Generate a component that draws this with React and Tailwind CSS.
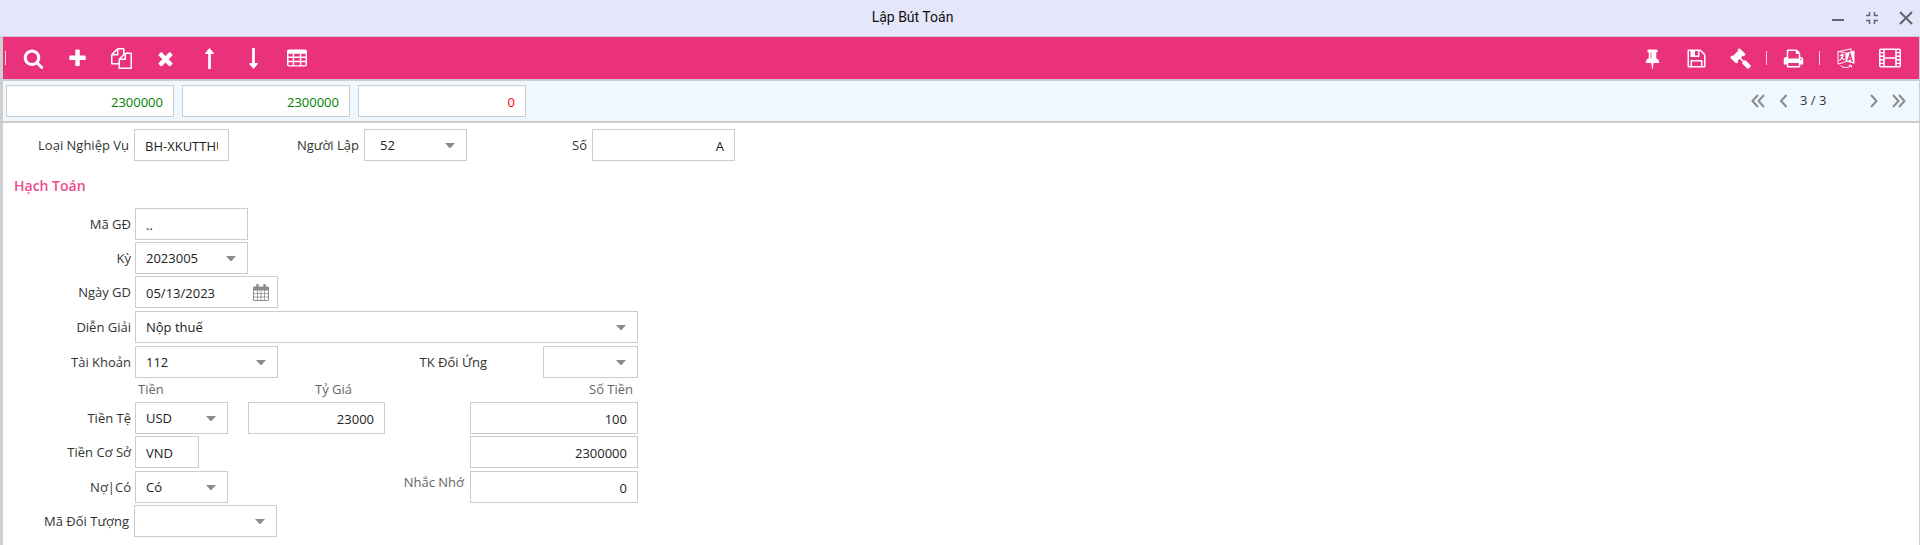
import React from "react";

const ICONS = {
    search: "M1216 832q0-185-131.5-316.5t-316.5-131.5-316.5 131.5-131.5 316.5 131.5 316.5 316.5 131.5 316.5-131.5 131.5-316.5zm512 832q0 52-38 90t-90 38q-54 0-90-38l-343-342q-179 124-399 124-143 0-273.5-55.5t-225-150-150-225-55.5-273.5 55.5-273.5 150-225 225-150 273.5-55.5 273.5 55.5 225 150 150 225 55.5 273.5q0 220-124 399l343 343q37 37 37 90z",
    plus: "M1600 736v192q0 40-28 68t-68 28h-416v416q0 40-28 68t-68 28h-192q-40 0-68-28t-28-68v-416h-416q-40 0-68-28t-28-68v-192q0-40 28-68t68-28h416v-416q0-40 28-68t68-28h192q40 0 68 28t28 68v416h416q40 0 68 28t28 68z",
    copy: "M1696 384q40 0 68 28t28 68v1216q0 40-28 68t-68 28h-960q-40 0-68-28t-28-68v-288h-544q-40 0-68-28t-28-68v-672q0-40 20-88t48-76l408-408q28-28 76-48t88-20h416q40 0 68 28t28 68v328q68-40 128-40h416zm-544 213l-299 299h299v-299zm-640-384l-299 299h299v-299zm196 647l316-316v-416h-384v416q0 40-28 68t-68 28h-416v640h512v-256q0-40 20-88t48-76zm956 804v-1152h-384v416q0 40-28 68t-68 28h-416v640h896z",
    times: "M1490 1322q0 40-28 68l-136 136q-28 28-68 28t-68-28l-294-294-294 294q-28 28-68 28t-68-28l-136-136q-28-28-28-68t28-68l294-294-294-294q-28-28-28-68t28-68l136-136q28-28 68-28t68 28l294 294 294-294q28-28 68-28t68 28l136 136q28 28 28 68t-28 68l-294 294 294 294q28 28 28 68z",
    up: "M896 0L1260 420q20 28 0 60t-50 32h-198v1248q0 32-32 32h-168q-32 0-32-32v-1248h-198q-30 0-50-32t0-60z",
    down: "M896 1792L1260 1372q20-28 0-60t-50-32h-198v-1248q0-32-32-32h-168q-32 0-32 32v1248h-198q-30 0-50 32t0 60z",
    table: "M160 128h1472q160 0 160 160v1216q0 160-160 160h-1472q-160 0-160-160v-1216q0-160 160-160zM128 512v256h384v-256zM640 512v256h512v-256zM1280 512v256h384v-256zM128 896v256h384v-256zM640 896v256h512v-256zM1280 896v256h384v-256zM128 1280v256h384v-256zM640 1280v256h512v-256zM1280 1280v256h384v-256z",
    pin: "M800 864v-448q0-14-9-23t-23-9-23 9-9 23v448q0 14 9 23t23 9 23-9 9-23zm672 352q0 26-19 45t-45 19h-429l-51 483q-2 12-10.5 20.5t-20.5 8.5h-1q-27 0-32-27l-76-485h-404q-26 0-45-19t-19-45q0-123 78.5-221.5t177.5-98.5v-512q-52 0-90-38t-38-90 38-90 90-38h640q52 0 90 38t38 90-38 90-90 38v512q99 0 177.5 98.5t78.5 221.5z",
    save: "M512 1536h768v-384h-768v384zm896 0h128v-896q0-14-10-38.5t-20-34.5l-281-281q-10-10-34-20t-39-10v416q0 40-28 68t-68 28h-576q-40 0-68-28t-28-68v-416h-128v1280h128v-416q0-40 28-68t68-28h832q40 0 68 28t28 68v416zm-384-928v-320q0-13-9.5-22.5t-22.5-9.5h-192q-13 0-22.5 9.5t-9.5 22.5v320q0 13 9.5 22.5t22.5 9.5h192q13 0 22.5-9.5t9.5-22.5zm640 32v928q0 40-28 68t-68 28h-1344q-40 0-68-28t-28-68v-1344q0-40 28-68t68-28h928q40 0 88 20t76 48l280 280q28 28 48 76t20 88z",
    gavel: "M1771 1536q0 53-37 90l-107 108q-39 37-91 37-53 0-90-37l-363-364q-38-36-38-90 0-53 43-96l-256-256-126 126q-14 14-34 14t-34-14q2 2 12.5 12t12.5 13 10 11.5 10 13.5 6 13.5 5.5 16.5 1.5 18q0 38-28 68-3 3-16.5 18t-19 20.5-18.5 16.5-22 15.5-22 9-26 4.5q-40 0-68-28l-408-408q-28-28-28-68 0-13 4.5-26t9-22 15.5-22 16.5-18.5 20.5-19 18-16.5q30-28 68-28 10 0 18 1.5t16.5 5.5 13.5 6 13.5 10 11.5 10 13 12.5 12 12.5q-14-14-14-34t14-34l348-348q14-14 34-14t34 14q-2-2-12.5-12t-12.5-13-10-11.5-10-13.5-6-13.5-5.5-16.5-1.5-18q0-38 28-68 3-3 16.5-18t19-20.5 18.5-16.5 22-15.5 22-9 26-4.5q40 0 68 28l408 408q28 28 28 68 0 13-4.5 26t-9 22-15.5 22-16.5 18.5-20.5 19-18 16.5q-30 28-68 28-10 0-18-1.5t-16.5-5.5-13.5-6-13.5-10-11.5-10-13-12.5-12-12.5q14 14 14 34t-14 34l-126 126 256 256q43-43 96-43 52 0 91 37l363 363q37 39 37 91z",
    print: "M448 1536h896v-256h-896v256zm0-640h896v-384h-160q-40 0-68-28t-28-68v-160h-640v640zm1152 64q0-26-19-45t-45-19-45 19-19 45 19 45 45 19 45-19 19-45zm128 0v416q0 13-9.5 22.5t-22.5 9.5h-224v160q0 40-28 68t-68 28h-960q-40 0-68-28t-28-68v-160h-224q-13 0-22.5-9.5t-9.5-22.5v-416q0-79 56.5-135.5t135.5-56.5h64v-544q0-40 28-68t68-28h672q40 0 88 20t76 48l152 152q28 28 48 76t20 88v256h64q79 0 135.5 56.5t56.5 135.5z",
};

const Icon = ({ name, size = "h-[21px] w-[21px]" }) => (
    <svg className={size} viewBox="0 0 1792 1792" fill="currentColor" fillRule="evenodd" aria-hidden="true">
        <path d={ICONS[name]} />
    </svg>
);

const FilmIcon = () => (
    <svg className="h-[20px] w-[22px]" viewBox="0 0 22 20" fill="none" stroke="currentColor" aria-hidden="true">
        <rect x="0.75" y="1.25" width="20.5" height="17.5" rx="1" strokeWidth="1.5" />
        <path d="M5 1v18M17 1v18M5 10h12" strokeWidth="1.6" />
        <path d="M1 4.6h4M1 8.2h4M1 11.8h4M1 15.4h4M17 4.6h4M17 8.2h4M17 11.8h4M17 15.4h4" strokeWidth="1.4" />
    </svg>
);

const LanguageIcon = () => (
    <svg className="h-[21px] w-[18px]" viewBox="0 0 18 21" fill="none" stroke="currentColor" aria-hidden="true">
        <path d="M8.5 5L17.5 2.5v13.2L8.5 13.4z" fill="currentColor" stroke="none" />
        <path d="M8.8 5L1 3.2v13l7.8-2.6M2.5 3.4L14 .8v2.6" />
        <path d="M2.8 7.8l4.4-1M4.6 5.6l.6 1.6M6.2 7.2c-.4 2.6-1.800 4.200-3.800 5.200M3.800 8.800l3.600 3.200" strokeWidth="1.1" />
        <path d="M10.8 13l2.200-7 2.400 8M11.600 11h3" stroke="#ea327c" strokeWidth="1.3" />
        <path d="M3.500 17.600c3 2.600 7.500 2.600 10.500 0M11.800 17.300h2.600v2.200" />
    </svg>
);

const ToolButton = ({ label, children }) => (
    <button type="button" aria-label={label} className="flex h-[42px] w-[44px] items-center justify-center text-white">
        {children}
    </button>
);

const Divider = ({ className = "" }) => <span className={`h-[14px] w-px bg-pink-200 ${className}`} />;

const PageButton = ({ label, d }) => (
    <button type="button" aria-label={label} className="flex h-6 w-[26px] items-center justify-center text-[#8a8a8a]">
        <svg className="h-[14px] w-[14px]" viewBox="0 0 14 14" fill="none" stroke="currentColor" strokeWidth="2" aria-hidden="true">
            <path d={d} />
        </svg>
    </button>
);

const BOX = "h-[32px] border border-[#cccccc] bg-white pt-[2px] pr-[10px] text-[13px] text-[#222222] outline-none";
const TOTAL = "h-[32px] w-[168px] border border-[#cccccc] bg-white px-[10px] pt-[2px] text-right outline-none";

const Label = ({ htmlFor, className = "w-[128px]", children }) => (
    <label htmlFor={htmlFor} className={`shrink-0 text-right text-[13px] leading-[18px] text-[#333333] ${className}`}>
        {children}
    </label>
);

const TextBox = ({ id, value, className = "", ...rest }) => (
    <input id={id} type="text" defaultValue={value} className={`${BOX} pl-[10px] ${className}`} {...rest} />
);

const SelectBox = ({ id, value, className = "", pad = "pl-[10px]" }) => (
    <div className={`grid items-center ${className}`}>
        <select id={id} defaultValue={value} className={`${BOX} ${pad} col-start-1 row-start-1 w-full appearance-none`}>
            <option value={value}>{value}</option>
        </select>
        <svg className="pointer-events-none col-start-1 row-start-1 mr-[12px] h-[5px] w-[10px] justify-self-end" viewBox="0 0 10 5" fill="#8c8c8c" aria-hidden="true">
            <path d="M0 0h10L5.500 5h-1z" />
        </svg>
    </div>
);

const DateBox = ({ id, value, className = "" }) => (
    <div className={`grid items-center ${className}`}>
        <TextBox id={id} value={value} className="col-start-1 row-start-1 w-full" />
        <button type="button" aria-label="Chọn ngày" className="col-start-1 row-start-1 mr-[9px] justify-self-end text-[#8c8c8c]">
            <svg className="h-[17px] w-[16px]" viewBox="0 0 16 17" fill="none" stroke="currentColor" aria-hidden="true">
                <path d="M.5 3.500h15v13H.5z" />
                <path d="M.5 3h15v3H.5z" fill="currentColor" />
                <path d="M4.500 0v4M11.500 0v4" strokeWidth="2.400" />
                <path d="M1 9.500h14M1 13h14M4.500 6v10M8 6v10M11.500 6v10" strokeWidth=".8" />
            </svg>
        </button>
    </div>
);

export default function App() {
    return (
        <div className="min-h-screen bg-white font-['Open_Sans','Noto_Sans',sans-serif] text-[13px]">
            {/* Thanh tiêu đề */}
            <header className="flex h-[37px] items-center border-b border-[#cccccc] bg-[#e6e6fa]">
                <h1 className="flex-1 pb-[2px] text-center font-[Roboto,sans-serif] text-[14px] text-[#111111]">Lập Bút Toán</h1>
                <div className="flex items-center gap-[20px] pr-[7px] pl-[6px] text-[#62626c]">
                    <button type="button" aria-label="Thu nhỏ">
                        <svg className="h-[14px] w-[14px]" viewBox="0 0 14 14" fill="none" stroke="currentColor" strokeWidth="2"><path d="M1 9h12" /></svg>
                    </button>
                    <button type="button" aria-label="Khôi phục">
                        <svg className="h-[14px] w-[14px]" viewBox="0 0 14 14" fill="none" stroke="currentColor" strokeWidth="1.5"><path d="M1 4.500h3.500V1M9.500 1v3.500H13M1 9.500h3.500V13M9.500 13V9.500H13" /></svg>
                    </button>
                    <button type="button" aria-label="Đóng">
                        <svg className="h-[14px] w-[14px]" viewBox="0 0 14 14" fill="none" stroke="currentColor" strokeWidth="2"><path d="M1 1l12 12M13 1L1 13" /></svg>
                    </button>
                </div>
            </header>

            <div className="min-h-[508px] border-r border-l-3 border-[#cfcfcf]">
                {/* Thanh công cụ */}
                <div className="flex h-[44px] items-center justify-between border-b-2 border-[#cccccc] bg-[#ea327c] pr-[7px] pl-[2px]">
                    <div className="flex items-center">
                        <Divider />
                        <div className="flex items-center pl-[5px]">
                            <ToolButton label="Tìm kiếm"><Icon name="search" /></ToolButton>
                            <ToolButton label="Thêm"><Icon name="plus" /></ToolButton>
                            <ToolButton label="Sao chép"><Icon name="copy" /></ToolButton>
                            <ToolButton label="Xóa"><Icon name="times" /></ToolButton>
                            <ToolButton label="Lên"><Icon name="up" /></ToolButton>
                            <ToolButton label="Xuống"><Icon name="down" /></ToolButton>
                            <ToolButton label="Bảng"><Icon name="table" size="h-[20px] w-[20px]" /></ToolButton>
                        </div>
                    </div>
                    <div className="flex items-center">
                        <ToolButton label="Ghim"><Icon name="pin" /></ToolButton>
                        <ToolButton label="Lưu"><Icon name="save" /></ToolButton>
                        <ToolButton label="Duyệt"><Icon name="gavel" /></ToolButton>
                        <Divider className="mx-[4px]" />
                        <ToolButton label="In"><Icon name="print" /></ToolButton>
                        <Divider className="mx-[4px]" />
                        <ToolButton label="Ngôn ngữ"><LanguageIcon /></ToolButton>
                        <ToolButton label="Phim"><FilmIcon /></ToolButton>
                    </div>
                </div>

                {/* Tổng tiền và phân trang */}
                <div className="flex h-[42px] items-center justify-between border-b-2 border-[#cccccc] bg-[#f0f8ff] pr-[7px] pl-[3px]">
                    <div className="flex gap-[8px]">
                        <input aria-label="Tổng nợ" defaultValue="2300000" className={`${TOTAL} text-[#008000]`} />
                        <input aria-label="Tổng có" defaultValue="2300000" className={`${TOTAL} text-[#008000]`} />
                        <input aria-label="Chênh lệch" defaultValue="0" className={`${TOTAL} text-[#ff0000]`} />
                    </div>
                    <nav className="flex items-center">
                        <PageButton label="Trang đầu" d="M7 1L1.500 7 7 13M13 1L7.500 7l5.500 6" />
                        <PageButton label="Trang trước" d="M9.500 1L4 7l5.500 6" />
                        <span className="w-[63px] pl-[3px] text-[#333333]">3 / 3</span>
                        <PageButton label="Trang sau" d="M5 1l5.500 6L5 13" />
                        <PageButton label="Trang cuối" d="M1 1l5.500 6L1 13M7 1l5.500 6L7 13" />
                    </nav>
                </div>

                <form>
                    <div className="flex items-center pt-[6px]">
                        <Label htmlFor="loai" className="w-[126px]">Loại Nghiệp Vụ</Label>
                        <TextBox id="loai" value="BH-XKUTTHUE" className="ml-[5px] w-[95px]" />
                        <Label htmlFor="nguoi" className="w-[130px]">Người Lập</Label>
                        <SelectBox id="nguoi" value="52" className="ml-[5px] w-[103px]" pad="pl-[15px]" />
                        <Label htmlFor="so" className="w-[120px]">Số</Label>
                        <TextBox id="so" value="A" className="ml-[5px] w-[143px] text-right" />
                    </div>

                    <h2 className="mt-[15px] ml-[11px] text-[14px] leading-[20px] font-semibold text-[#ee4b8c]">Hạch Toán</h2>

                    {/* Chi tiết hạch toán */}
                    <div className="mt-[12px] flex flex-col gap-[2px]">
                        <div className="flex items-center">
                            <Label htmlFor="magd">Mã GĐ</Label>
                            <TextBox id="magd" value=".." className="ml-[4px] w-[113px]" />
                        </div>
                        <div className="flex items-center">
                            <Label htmlFor="ky">Kỳ</Label>
                            <SelectBox id="ky" value="2023005" className="ml-[4px] w-[113px]" />
                        </div>
                        <div className="flex items-center">
                            <Label htmlFor="ngay">Ngày GD</Label>
                            <DateBox id="ngay" value="05/13/2023" className="ml-[4px] w-[143px]" />
                        </div>
                        <div className="flex items-center pt-px">
                            <Label htmlFor="diengiai">Diễn Giải</Label>
                            <SelectBox id="diengiai" value="Nộp thuế" className="ml-[4px] w-[503px]" />
                        </div>
                        <div className="flex items-center pt-px">
                            <Label htmlFor="taikhoan">Tài Khoản</Label>
                            <SelectBox id="taikhoan" value="112" className="ml-[4px] w-[143px]" />
                            <Label htmlFor="doiung" className="w-[209px]">TK Đối Ứng</Label>
                            <SelectBox id="doiung" value="" className="ml-[56px] w-[95px]" />
                        </div>
                    </div>

                    <div className="flex h-[24px] items-center text-[#666666]">
                        <span className="ml-[135px] w-[177px]">Tiền</span>
                        <span className="w-[274px]">Tỷ Giá</span>
                        <span>Số Tiền</span>
                    </div>

                    <div className="flex flex-col gap-[2px]">
                        <div className="flex items-center">
                            <Label htmlFor="tiente">Tiền Tệ</Label>
                            <SelectBox id="tiente" value="USD" className="ml-[4px] w-[93px]" />
                            <TextBox aria-label="Tỷ Giá" value="23000" className="ml-[20px] w-[137px] text-right" />
                            <TextBox aria-label="Số Tiền" value="100" className="ml-[85px] w-[168px] text-right" />
                        </div>
                        <div className="flex items-center">
                            <Label htmlFor="coso">Tiền Cơ Sở</Label>
                            <TextBox id="coso" value="VND" className="ml-[4px] w-[64px]" />
                            <TextBox aria-label="Số Tiền Cơ Sở" value="2300000" className="ml-[271px] w-[168px] text-right" />
                        </div>
                        <div className="flex items-center pt-px">
                            <Label htmlFor="noco">Nợ|Có</Label>
                            <SelectBox id="noco" value="Có" className="ml-[4px] w-[93px]" />
                            <label htmlFor="nhacnho" className="w-[236px] pb-[8px] text-right text-[#666666]">Nhắc Nhớ</label>
                            <TextBox id="nhacnho" value="0" className="ml-[6px] w-[168px] text-right" />
                        </div>
                        <div className="flex items-center">
                            <Label htmlFor="doituong" className="w-[126px]">Mã Đối Tượng</Label>
                            <SelectBox id="doituong" value="" className="ml-[5px] w-[143px]" />
                        </div>
                    </div>
                </form>
            </div>
        </div>
    );
}
